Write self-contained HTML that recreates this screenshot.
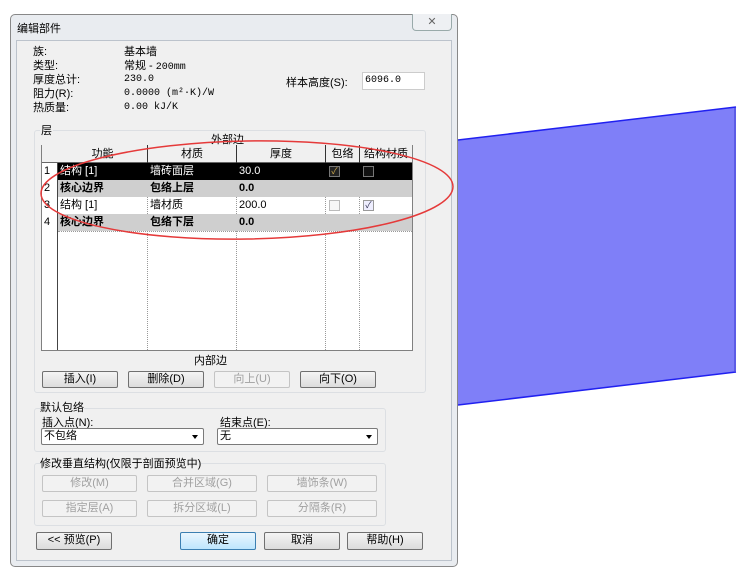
<!DOCTYPE html>
<html><head><meta charset="utf-8"><style>
*{margin:0;padding:0;box-sizing:border-box}
body{width:750px;height:573px;background:#fff;position:relative;overflow:hidden;font-family:"Liberation Sans","Noto Sans CJK SC",sans-serif;font-size:11px;color:#000}
.a{position:absolute;white-space:nowrap}
.mono{font-family:"Liberation Mono","Noto Sans CJK SC",monospace;font-size:10px}
.ln{height:14px;line-height:14px}
.btn{position:absolute;height:17px;border:1px solid #707070;border-radius:2px;background:linear-gradient(#f4f4f4,#dcdcdc);text-align:center;line-height:15px;font-size:11px}
.dis{border-color:#c4c4c4;color:#a0a0a0;background:#f2f2f2}
.grp{position:absolute;border:1px solid #dcdfe3;border-radius:3px}
.sel{position:absolute;height:17px;border:1px solid #7a7a7a;border-radius:2px;background:#fff;font-size:11px;line-height:15px;padding-left:2px}
.sel:after{content:"";position:absolute;right:5px;top:6px;border:3px solid transparent;border-top:4px solid #000}
</style></head><body>
<svg class="a" style="left:0;top:0" width="750" height="573">
<polygon points="458,140 736,107 736,372 458,405" fill="#7f7ff8"/>
<line x1="458" y1="140" x2="736" y2="107" stroke="#2020f0" stroke-width="1.5"/>
<line x1="458" y1="405" x2="736" y2="372" stroke="#2020f0" stroke-width="1.5"/>
<line x1="735" y1="108" x2="735" y2="372" stroke="#5050e0" stroke-width="1.5"/>
</svg>
<div class="a" style="left:10px;top:14px;width:448px;height:553px;border:1px solid #888;border-radius:5px;background:#e9ecf0"></div>
<div class="a" style="left:16px;top:40px;width:436px;height:521px;border:1px solid #bcc3cc;background:#f0f0f0"></div>
<div class="a" style="left:17px;top:20px;font-size:11px">编辑部件</div>
<div class="a" style="left:412px;top:14px;width:40px;height:17px;border:1px solid #9aa;border-top:none;border-radius:0 0 4px 4px;background:#eef0f3;color:#666;text-align:center;font-size:11px;line-height:16px">✕</div>

<div class="a" style="left:33px;top:45px">
<div class="ln">族:</div><div class="ln">类型:</div><div class="ln">厚度总计:</div><div class="ln">阻力(R):</div><div class="ln">热质量:</div></div>
<div class="a" style="left:124px;top:45px">
<div class="ln">基本墙</div><div class="ln">常规 - <span class="mono">200mm</span></div><div class="ln mono">230.0</div><div class="ln mono">0.0000 (m²·K)/W</div><div class="ln mono">0.00 kJ/K</div></div>
<div class="a" style="left:286px;top:74px">样本高度(S):</div>
<div class="a mono" style="left:362px;top:72px;width:63px;height:18px;border:1px solid #ccc;background:#fff;line-height:16px;padding-left:2px">6096.0</div>

<div class="grp" style="left:34px;top:130px;width:392px;height:263px"></div>
<div class="a" style="left:40px;top:122px;background:#f0f0f0;padding:0 1px">层</div>
<div class="a" style="left:211px;top:131px">外部边</div>
<div class="a" style="left:41px;top:145px;width:372px;height:206px;border:1px solid #808080;background:#fff"></div>
<div class="a" style="left:42px;top:145px;width:16px;height:205px;background:#fff;border-right:1px solid #444"></div>
<div class="a" style="left:42px;top:145px;width:370px;height:18px;background:#f0f0f0;border-bottom:1px solid #666"></div>
<div class="a" style="left:58px;top:145px;width:90px;text-align:center;border-right:1px solid #333;height:18px;line-height:18px">功能</div>
<div class="a" style="left:148px;top:145px;width:89px;text-align:center;border-right:1px solid #333;height:18px;line-height:18px">材质</div>
<div class="a" style="left:237px;top:145px;width:89px;text-align:center;border-right:1px solid #333;height:18px;line-height:18px">厚度</div>
<div class="a" style="left:326px;top:145px;width:34px;text-align:center;border-right:1px solid #333;height:18px;line-height:18px">包络</div>
<div class="a" style="left:360px;top:145px;width:52px;text-align:center;height:18px;line-height:18px">结构材质</div>
<div class="a" style="left:147px;top:163px;height:187px;border-left:1px dotted #999"></div>
<div class="a" style="left:236px;top:163px;height:187px;border-left:1px dotted #999"></div>
<div class="a" style="left:325px;top:163px;height:187px;border-left:1px dotted #999"></div>
<div class="a" style="left:359px;top:163px;height:187px;border-left:1px dotted #999"></div>
<div class="a" style="left:42px;top:163px;width:16px;height:68px;line-height:17px;padding-left:2px;border-right:1px solid #444">1<br>2<br>3<br>4</div>
<div class="a" style="left:58px;top:163px;width:354px;height:17px;background:#000"></div>
<div class="a" style="left:58px;top:180px;width:354px;height:17px;background:#cfcfcf"></div>
<div class="a" style="left:58px;top:214px;width:354px;height:17px;background:#cfcfcf"></div>
<div class="a" style="left:58px;top:163px;width:354px;height:68px;line-height:17px">
<div class="a" style="left:2px;top:0;color:#fff">结构 [1]</div><div class="a" style="left:92px;top:0;color:#fff">墙砖面层</div><div class="a" style="left:181px;top:0;color:#fff">30.0</div>
<div class="a" style="left:2px;top:17px;font-weight:bold">核心边界</div><div class="a" style="left:92px;top:17px;font-weight:bold">包络上层</div><div class="a" style="left:181px;top:17px;font-weight:bold">0.0</div>
<div class="a" style="left:2px;top:34px">结构 [1]</div><div class="a" style="left:92px;top:34px">墙材质</div><div class="a" style="left:181px;top:34px">200.0</div>
<div class="a" style="left:2px;top:51px;font-weight:bold">核心边界</div><div class="a" style="left:92px;top:51px;font-weight:bold">包络下层</div><div class="a" style="left:181px;top:51px;font-weight:bold">0.0</div>
</div>
<div class="a" style="left:329px;top:166px;width:11px;height:11px;border:1px solid #777;background:#222;color:#c9a64a;font-size:9px;line-height:9px;text-align:center">✓</div>
<div class="a" style="left:363px;top:166px;width:11px;height:11px;border:1px solid #777;background:#111"></div>
<div class="a" style="left:329px;top:200px;width:11px;height:11px;border:1px solid #bbb;background:#f6f6f6"></div>
<div class="a" style="left:363px;top:200px;width:11px;height:11px;border:1px solid #999;background:#eef;color:#335;font-size:9px;line-height:9px;text-align:center">✓</div>
<div class="a" style="left:58px;top:231px;width:354px;border-top:1px dotted #999"></div>
<div class="a" style="left:194px;top:352px">内部边</div>
<div class="btn" style="left:42px;top:371px;width:76px">插入(I)</div>
<div class="btn" style="left:128px;top:371px;width:76px">删除(D)</div>
<div class="btn dis" style="left:214px;top:371px;width:76px">向上(U)</div>
<div class="btn" style="left:300px;top:371px;width:76px">向下(O)</div>

<div class="grp" style="left:34px;top:408px;width:352px;height:44px"></div>
<div class="a" style="left:40px;top:399px;background:#f0f0f0">默认包络</div>
<div class="a" style="left:42px;top:414px">插入点(N):</div>
<div class="a" style="left:220px;top:414px">结束点(E):</div>
<div class="sel" style="left:41px;top:428px;width:163px">不包络</div>
<div class="sel" style="left:217px;top:428px;width:161px">无</div>

<div class="grp" style="left:34px;top:463px;width:352px;height:63px"></div>
<div class="a" style="left:40px;top:455px;background:#f0f0f0">修改垂直结构(仅限于剖面预览中)</div>
<div class="btn dis" style="left:42px;top:475px;width:95px">修改(M)</div>
<div class="btn dis" style="left:147px;top:475px;width:110px">合并区域(G)</div>
<div class="btn dis" style="left:267px;top:475px;width:110px">墙饰条(W)</div>
<div class="btn dis" style="left:42px;top:500px;width:95px">指定层(A)</div>
<div class="btn dis" style="left:147px;top:500px;width:110px">拆分区域(L)</div>
<div class="btn dis" style="left:267px;top:500px;width:110px">分隔条(R)</div>

<div class="btn" style="left:36px;top:532px;width:76px;height:18px">&lt;&lt; 预览(P)</div>
<div class="btn" style="left:180px;top:532px;width:76px;height:18px;border-color:#3c7fb1;background:linear-gradient(#eaf6fd,#bee6fd)">确定</div>
<div class="btn" style="left:264px;top:532px;width:76px;height:18px">取消</div>
<div class="btn" style="left:347px;top:532px;width:76px;height:18px">帮助(H)</div>

<svg class="a" style="left:0;top:0" width="750" height="573">
<ellipse cx="247" cy="190" rx="206" ry="49" fill="none" stroke="#e53a3a" stroke-width="1.5" transform="rotate(-1 247 190)"/>
</svg>
</body></html>
